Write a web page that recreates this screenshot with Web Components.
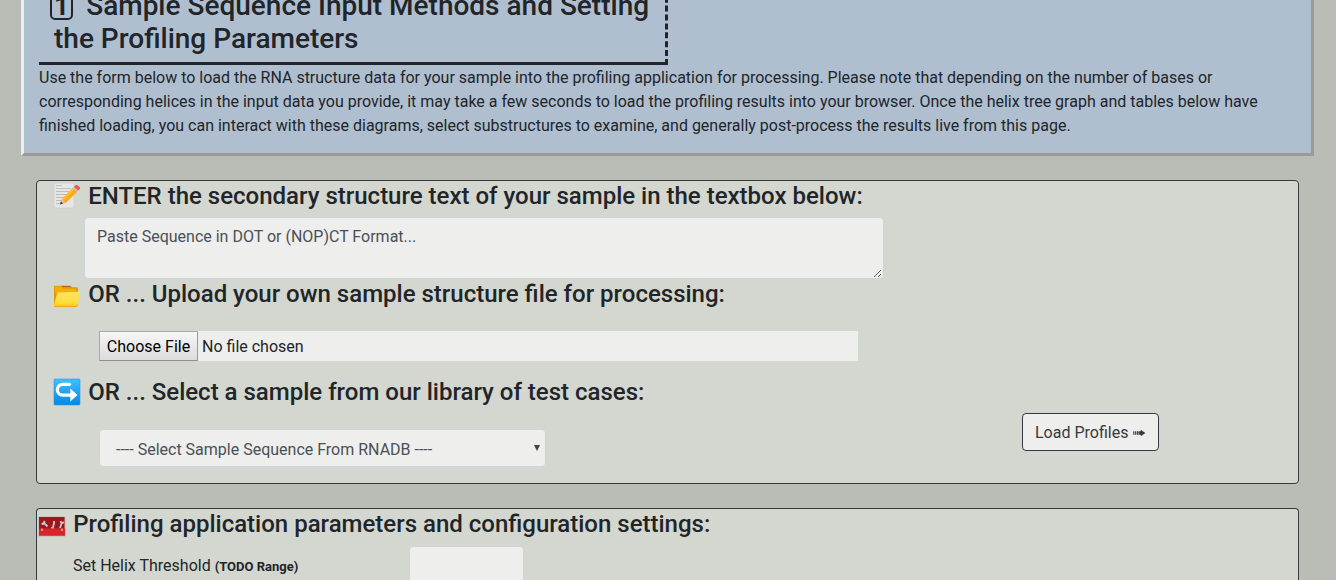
<!DOCTYPE html>
<html lang="en">
<head>
<meta charset="utf-8">
<title>RNA structure profiling</title>
<style>
html, body { margin: 0; height: 580px; overflow: hidden; background: #babdb6; }
body { font: 16px/24px Roboto, "Liberation Sans", sans-serif; color: #212529; }
</style>
</head>
<body>
<profile-page></profile-page>
<script>
const define = (name, markup) => {
  const template = document.createElement('template');
  template.innerHTML = markup;
  customElements.define(name, class extends HTMLElement {
    constructor() {
      super();
      this.attachShadow({ mode: 'open' }).append(template.content.cloneNode(true));
    }
  });
};

define('key-cap', `
<style>
:host { display: inline-block; box-sizing: border-box; width: 23px; height: 29px; border: 2px solid #212529; border-radius: 5px; font: 700 26px/26px Roboto, sans-serif; text-align: center; vertical-align: top; margin: 2px 13.2px 0 -4px; }
</style><slot></slot>`);

define('intro-banner', `
<style>
:host { display: block; box-sizing: border-box; width: 1293px; height: 186px; margin: -30px 0 0 21px; padding: 0 15px; background: #afbfd0; border: 3px solid; border-color: #eee #9a9a9a #9a9a9a #eee; border-top: 0; }
h3 { box-sizing: border-box; width: 629px; height: 95px; margin: 0; padding: 19px 12px 0 15px; font-size: 28px; font-weight: 500; line-height: 33px; border-bottom: 3px solid #212529; border-right: 3px dashed #212529; white-space: nowrap; }
p { margin: 0; padding-top: 1px; white-space: nowrap; }
</style>
<h3><slot name="title"></slot></h3>
<p><slot></slot></p>`);

define('form-panel', `
<style>
:host { display: block; box-sizing: border-box; width: 1263px; margin: 24px 0 0 36px; background: #d3d7cf; border: 1px solid #343a40; border-radius: 4px; overflow: hidden; }
</style><slot></slot>`);

define('step-heading', `
<style>
:host { display: flex; height: 29px; padding-left: 16px; font-size: 24px; font-weight: 500; line-height: 28.8px; white-space: nowrap; }
.icon { flex: none; width: 28px; height: 28px; margin: 1px 7.2px 0 0; }
.text { padding-top: 1px; }
</style><span class="icon"><slot name="icon"></slot></span><span class="text"><slot></slot></span>`);

define('icon-memo', `
<style>:host, svg { display: block; }</style>
<svg width="28" height="28" viewBox="0 0 28 28">
<path d="M1 1h20v25H1z" fill="#e6e6e6" stroke="#c9cbc8" stroke-width=".7"/>
<path d="M3 3.5h6M3 6.5h15M3 9.5h15M3 12.5h15M3 15.5h12M3 18.5h10M3 21.5h6" stroke="#bcbfc0" stroke-width="1"/>
<path d="M7 22.4 9 17 20 5.8l4.5 3.8L13 20.8z" fill="#fca91c"/>
<path d="M9 17 20 5.8l1.6 1.3L10.7 18.4z" fill="#ffc02c"/>
<path d="m7 22.4 2-5.4 4 3.8z" fill="#e9bd87"/><path d="m7 22.4.9-2.8 2 1.9z" fill="#333"/>
<path d="m19.5 6.2 1.6-1.5 4.4 3.8-1.5 1.6z" fill="#b9c1c5"/>
<path d="m21 4.8 1.6-1.6q1-.7 2 .2l2 1.7q.8 1 .1 1.8l-1.4 1.7z" fill="#ef5350"/>
</svg>`);

define('icon-folder', `
<style>:host, svg { display: block; }</style>
<svg width="28" height="28" viewBox="0 0 28 28">
<defs><linearGradient id="f" x2="0" y2="1"><stop stop-color="#ffe263"/><stop offset=".7" stop-color="#ffdf3b"/><stop offset="1" stop-color="#f8c51d"/></linearGradient></defs>
<g transform="translate(0 .8)">
<path d="M1 6q0-1 1-1h6l1.5 1.5H24q1 0 1 1V25H1z" fill="#e59a05"/>
<path d="M8 5h9l2 1.5H9.5z" fill="#b86117"/><path d="M2 6h6l2 2h13v4H2z" fill="#f4b000"/>
<path d="M4.3 11.7 25.8 11q1.5 0 1.2 1.1L24.5 25.2q-.2.8-1.2.8H2q-1.2 0-1-1.1z" fill="url(#f)"/>
<path d="M1.2 25.7h22.6" stroke="#e99b13" stroke-width=".8"/>
</g></svg>`);

define('icon-hook', `
<style>:host, svg { display: block; }</style>
<svg width="28" height="28" viewBox="0 0 28 28">
<defs><linearGradient id="b" x2="0" y2="1"><stop stop-color="#40bfff"/><stop offset="1" stop-color="#0588e4"/></linearGradient></defs>
<rect x="1" y="1" width="26" height="26" rx="1" fill="url(#b)" stroke="#2a9ddd" stroke-width=".6"/>
<path d="M16.6 6.3H9.8a5.3 5.3 0 0 0 0 10.9H19" fill="none" stroke="#fff" stroke-width="3.2" stroke-linecap="round"/>
<path d="m17.3 10.6 7.2 6.5-7.2 6.5z" fill="#fff"/>
</svg>`);

define('icon-toolbox', `
<style>:host, svg { display: block; }</style>
<svg width="28" height="28" viewBox="0 0 28 28">
<path d="M.5 6.5h27v20H.5z" fill="#c5b3aa"/><path d="M1 7h25.5v12H1z" fill="#9c161a"/>
<path d="M1 18.5h26v7.3H1z" fill="#d7242d"/>
<path d="m5 12 4.5 4.5M3.5 14l2.6-.4.4-2.7M22 18l2-6M22.5 11l1 2.2 2.5-1.1M14.8 18l1.5-6M16 11v3" stroke="#c9c6d4" stroke-width="1.8" fill="none"/>
<path d="M13 17.8h3.2" stroke="#f2a026" stroke-width="1.4"/><path d="M4 18.5v2.5M24 18.5v2.5" stroke="#e9b0b0" stroke-width="1.4"/>
</svg>`);

define('text-box', `
<style>
:host { display: flex; justify-content: space-between; align-items: flex-end; box-sizing: border-box; width: 800px; height: 62px; margin: 7px 0 0 47px; padding: 7px 0 0 12px; background: #eeeeec; border: 1px solid #ced4da; border-radius: 4px; color: #495057; }
span { align-self: flex-start; } svg { display: block; }
</style><span><slot></slot></span>
<svg width="10" height="11" viewBox="0 0 10 11" shape-rendering="crispEdges"><path d="M1 9h1v1H1zM2 8h1v1H2zM3 7h1v1H3zM4 6h1v1H4zM5 5h1v1H5zM6 4h1v1H6zM7 3h1v1H7zM5 9h1v1H5zM6 8h1v1H6zM7 7h1v1H7z" fill="#555"/></svg>`);

define('file-picker', `
<style>
:host { display: flex; box-sizing: border-box; width: 759px; height: 30px; margin: 23px 0 0 62px; background: #eeeeec; line-height: 31px; }
b { box-sizing: border-box; width: 99px; height: 30px; margin-right: 4px; border: 1px solid #a0a0a0; border-color: #a9a9a9 #999 #8f8f8f #a9a9a9; border-radius: 1px; background: linear-gradient(#f7f7f7, #dcdcdc); color: #000; font-weight: 400; line-height: 29px; text-align: center; }
</style><b><slot name="button"></slot></b><span><slot></slot></span>`);

define('select-box', `
<style>
:host { display: flex; justify-content: space-between; align-items: center; box-sizing: border-box; width: 447px; height: 38px; padding: 3px 5px 0 16px; background: #eeeeec; border: 1px solid #ced4da; border-radius: 4px; color: #495057; }
svg { display: block; margin-top: -4px; }
</style><span><slot></slot></span><svg width="6" height="6" viewBox="0 0 6 6"><path d="M0 0h6L3 6z" fill="#3f454a"/></svg>`);

define('push-button', `
<style>
:host { display: flex; align-items: center; box-sizing: border-box; width: 137px; height: 38px; padding: 1px 12px 0; border: 1px solid #343a40; border-radius: 4px; background: #eeeeec; color: #343a40; white-space: nowrap; }
svg { display: block; margin-left: 5px; }
</style><span><slot></slot></span><svg width="13" height="8" viewBox="0 0 13 8"><path d="M.3 2.3h1.2v3.4H.3zM2.2 2.3h1.3v3.4H2.2zM4.2 2.3h1.6v3.4H4.2zM6.3 2.3H8V.6L12.8 4 8 7.4V5.7H6.3z" fill="#343a40"/></svg>`);

define('profile-page', `
<style>
:host { display: block; height: 580px; overflow: hidden; }
.lead { display: flow-root; }
.input { height: 304px; }
.input step-heading:nth-of-type(3) { margin-top: 16px; }
.row { display: flex; align-items: flex-start; margin: 7px 0 0 62px; }
select-box { margin-top: 16px; }
push-button { margin-left: 476px; }
.config { height: 72px; border-bottom: 0; border-radius: 4px 4px 0 0; }
.config step-heading { padding-left: 1px; }
.config .param { display: flex; padding-left: 36px; margin-top: 8px; }
label { width: 336px; padding-top: 8px; }
small { font-size: 13px; font-weight: 700; }
i { box-sizing: border-box; width: 115px; height: 38px; background: #eeeeec; border: 1px solid #ced4da; border-radius: 4px; }
</style>
<div class="lead"><intro-banner>
<span slot="title"><key-cap>1</key-cap>Sample Sequence Input Methods and Setting<br>the Profiling Parameters</span>
Use the form below to load the RNA structure data for your sample into the profiling application for processing. Please note that depending on the number of bases or<br>corresponding helices in the input data you provide, it may take a few seconds to load the profiling results into your browser. Once the helix tree graph and tables below have<br>finished loading, you can interact with these diagrams, select substructures to examine, and generally post-process the results live from this page.
</intro-banner></div>
<form-panel class="input">
<step-heading><icon-memo slot="icon"></icon-memo>ENTER the secondary structure text of your sample in the textbox below:</step-heading>
<text-box>Paste Sequence in DOT or (NOP)CT Format...</text-box>
<step-heading><icon-folder slot="icon"></icon-folder>OR ... Upload your own sample structure file for processing:</step-heading>
<file-picker><span slot="button">Choose File</span>No file chosen</file-picker>
<step-heading><icon-hook slot="icon"></icon-hook>OR ... Select a sample from our library of test cases:</step-heading>
<div class="row"><select-box>---- Select Sample Sequence From RNADB ----</select-box><push-button>Load Profiles</push-button></div>
</form-panel>
<form-panel class="config">
<step-heading><icon-toolbox slot="icon"></icon-toolbox>Profiling application parameters and configuration settings:</step-heading>
<div class="param"><label>Set Helix Threshold <small>(TODO Range)</small></label><i></i></div>
</form-panel>`);
</script>
</body>
</html>
